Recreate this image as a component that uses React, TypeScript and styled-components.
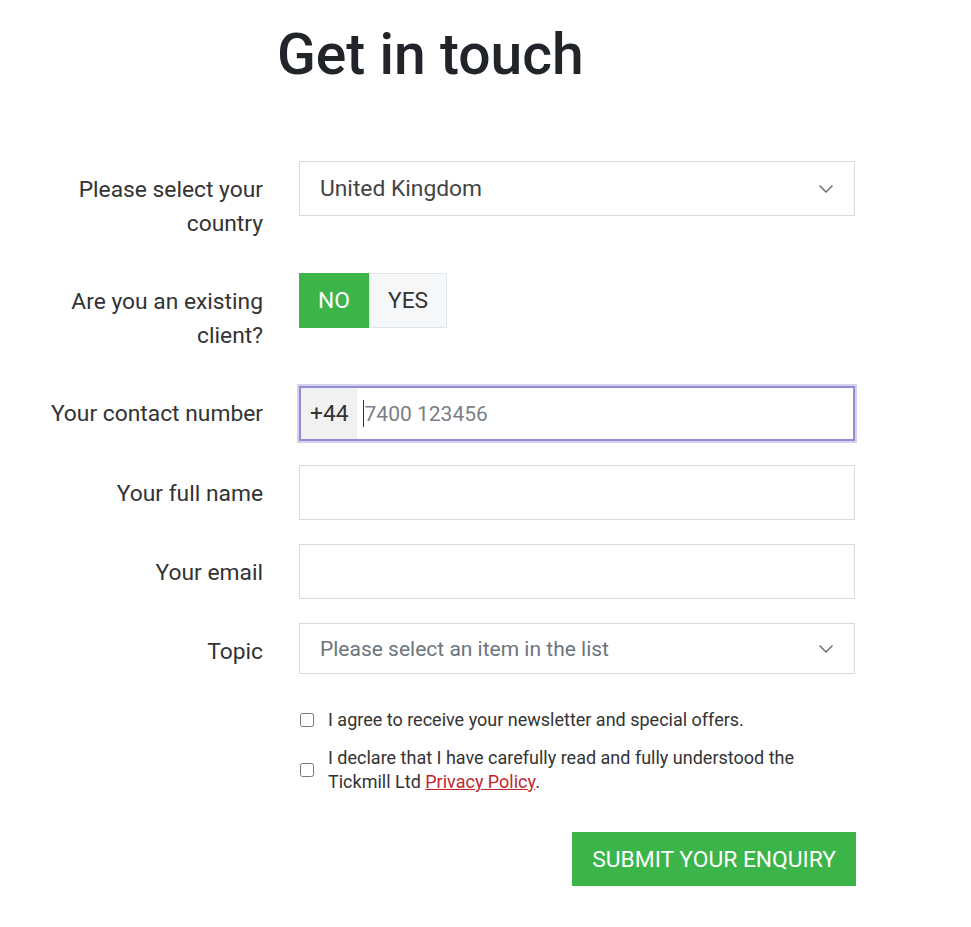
import React, { useState } from "react";
import styled, { createGlobalStyle } from "styled-components";

const GlobalStyle = createGlobalStyle`
  body {
    margin: 0;
    background: #ffffff;
    font-family: Roboto, "Liberation Sans", sans-serif;
    color: #333333;
  }
`;

function Chevron() {
   return (
      <svg width="16" height="10" viewBox="0 0 16 10" fill="none">
         <path d="M1.5 1.5 L8 8 L14.5 1.5" stroke="#666" strokeWidth="1.4" />
      </svg>
   );
}

function App() {
   const [client, setClient] = useState("NO");

   return (
      <Page>
         <GlobalStyle />
         <Title>Get in touch</Title>
         <Form>
            <Label>Please select your country</Label>
            <SelectBox>
               <span>United Kingdom</span>
               <Chevron />
            </SelectBox>

            <Label>Are you an existing client?</Label>
            <Field>
               <Toggle>
                  <ToggleButton active={client == "NO"} onClick={() => setClient("NO")}>
                     NO
                  </ToggleButton>
                  <ToggleButton active={client == "YES"} onClick={() => setClient("YES")}>
                     YES
                  </ToggleButton>
               </Toggle>
            </Field>

            <Label>Your contact number</Label>
            <Field>
               <PhoneBox>
                  <Prefix>+44</Prefix>
                  <PhoneInput placeholder="7400 123456" />
               </PhoneBox>
            </Field>

            <Label>Your full name</Label>
            <Field>
               <TextInput />
            </Field>

            <Label>Your email</Label>
            <Field>
               <TextInput />
            </Field>

            <Label>Topic</Label>
            <SelectBox short placeholder>
               <span>Please select an item in the list</span>
               <Chevron />
            </SelectBox>

            <span />
            <Checks>
               <CheckRow>
                  <Box type="checkbox" />
                  <CheckText>I agree to receive your newsletter and special offers.</CheckText>
               </CheckRow>
               <CheckRow>
                  <Box type="checkbox" />
                  <CheckText>
                     I declare that I have carefully read and fully understood the Tickmill Ltd{" "}
                     <Link href="#">Privacy Policy</Link>.
                  </CheckText>
               </CheckRow>
            </Checks>

            <span />
            <Actions>
               <Submit>Submit your enquiry</Submit>
            </Actions>
         </Form>
      </Page>
   );
}

export default App;

const Page = styled.div`
   width: 971px;
   padding: 22px 0 40px;
`;

const Title = styled.h1`
   margin: 0 0 73px 277px;
   font-size: 57px;
   font-weight: 500;
   line-height: 66px;
   color: #212529;
`;

const Form = styled.div`
   display: grid;
   grid-template-columns: 215px 556px;
   column-gap: 36px;
   row-gap: 24px;
   margin-left: 48px;
   align-items: start;
`;

const Label = styled.div`
   text-align: right;
   font-size: 22.8px;
   line-height: 34px;
   padding: 12px 0 8px;
   color: #333;
`;

const Field = styled.div`
   display: flex;
`;

const SelectBox = styled.div<{ short?: boolean; placeholder?: boolean }>`
   height: ${(p) => (p.short ? "51px" : "55px")};
   box-sizing: border-box;
   border: 1px solid #d9d9d9;
   display: flex;
   align-items: center;
   justify-content: space-between;
   padding: 0 20px;
   font-size: ${(p) => (p.placeholder ? "21px" : "22.8px")};
   color: ${(p) => (p.placeholder ? "#6c757d" : "#444")};
`;

const Toggle = styled.div`
   display: flex;
   height: 55px;
`;

const ToggleButton = styled.button<{ active?: boolean }>`
   font-family: inherit;
   font-size: 22.8px;
   padding: 0 18px;
   border: 1px solid ${(p) => (p.active ? "#3bb54a" : "#e3e6e8")};
   background: ${(p) => (p.active ? "#3bb54a" : "#f5f7f9")};
   color: ${(p) => (p.active ? "#fff" : "#333")};
   cursor: pointer;
`;

const PhoneBox = styled.div`
   flex: 1;
   display: flex;
   height: 55px;
   margin-top: 1px;
   box-sizing: border-box;
   border: 2px solid #8f8dd6;
   box-shadow: 0 0 0 2px #d4d2ef;
   background: #fff;
`;

const Prefix = styled.div`
   display: flex;
   align-items: center;
   padding: 0 8px 0 9px;
   background: #f1f1f1;
   font-size: 22.8px;
   color: #333;
`;

const PhoneInput = styled.input`
   flex: 1;
   border: none;
   outline: none;
   padding: 0 0 0 1px;
   margin: 12px 0 12px 6px;
   font-family: inherit;
   font-size: 21px;
   color: #444;
   border-left: 1.5px solid #333;
   &::placeholder {
      color: #7a7f85;
   }
`;

const TextInput = styled.input`
   flex: 1;
   height: 55px;
   box-sizing: border-box;
   border: 1px solid #d9d9d9;
   font-family: inherit;
   font-size: 21px;
   padding: 0 20px;
   outline: none;
`;

const Checks = styled.div`
   display: flex;
   flex-direction: column;
   gap: 14px;
   padding-top: 7px;
`;

const CheckRow = styled.label`
   display: flex;
   align-items: center;
   gap: 14px;
`;

const Box = styled.input`
   width: 14px;
   height: 14px;
   margin: 0 0 0 1px;
   flex-shrink: 0;
   align-self: center;
`;

const CheckText = styled.span`
   font-size: 18px;
   line-height: 24px;
   color: #333;
   max-width: 480px;
`;

const Link = styled.a`
   color: #c0272d;
   text-decoration: underline;
`;

const Actions = styled.div`
   display: flex;
   justify-content: flex-end;
   margin-top: 14px;
   margin-right: -1px;
`;

const Submit = styled.button`
   height: 54px;
   padding: 0 20px;
   border: none;
   background: #3bb54a;
   color: #fff;
   font-family: inherit;
   font-size: 22.8px;
   text-transform: uppercase;
   cursor: pointer;
`;
